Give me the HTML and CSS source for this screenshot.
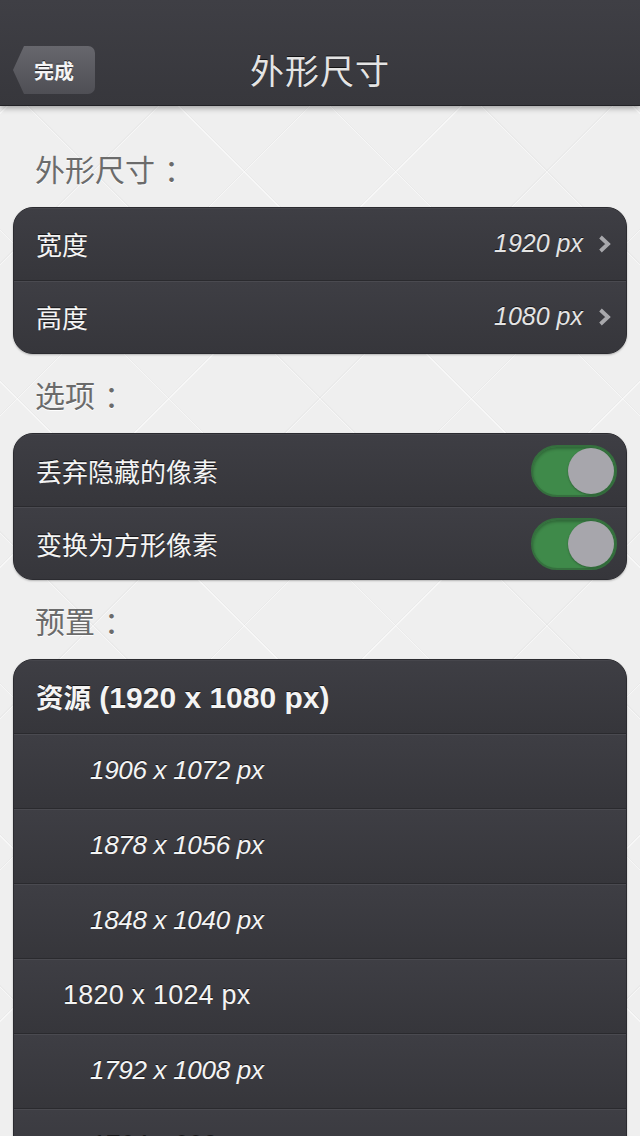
FILE: index.html
```html
<!DOCTYPE html>
<html lang="zh-CN">
<head>
  <meta charset="UTF-8" />
  <meta name="viewport" content="width=device-width, initial-scale=1.0"/>
  <title>外形尺寸</title>
  <link rel="stylesheet" href="styles.css">
</head>
<body>

  <header class="navbar">
    <a href="#" class="back-btn">完成</a>
    <h1 class="nav-title">外形尺寸</h1>
    <span class="nav-spacer"></span>
  </header>

  <main class="content">
    <h2 class="section-title first">外形尺寸<span class="colon">：</span></h2>
    <ul class="group">
      <li class="row">
        <span class="label">宽度</span>
        <span class="value">1920 px</span>
        <svg class="chevron" viewBox="0 0 13 18" width="13" height="18"><polyline points="2.5,2 10,9 2.5,16" /></svg>
      </li>
      <li class="row">
        <span class="label">高度</span>
        <span class="value">1080 px</span>
        <svg class="chevron" viewBox="0 0 13 18" width="13" height="18"><polyline points="2.5,2 10,9 2.5,16" /></svg>
      </li>
    </ul>

    <h2 class="section-title">选项<span class="colon">：</span></h2>
    <ul class="group">
      <li class="row toggle-row">
        <span class="label">丢弃隐藏的像素</span>
        <span class="switch on"><span class="knob"></span></span>
      </li>
      <li class="row toggle-row">
        <span class="label">变换为方形像素</span>
        <span class="switch on"><span class="knob"></span></span>
      </li>
    </ul>

    <h2 class="section-title">预置<span class="colon">：</span></h2>
    <ul class="group presets">
      <li class="row preset source"><span><span class="cjk">资源</span> (1920 x 1080 px)</span></li>
      <li class="row preset sub">1906 x 1072 px</li>
      <li class="row preset sub">1878 x 1056 px</li>
      <li class="row preset sub">1848 x 1040 px</li>
      <li class="row preset std">1820 x 1024 px</li>
      <li class="row preset sub">1792 x 1008 px</li>
      <li class="row preset sub">1764 x 992 px</li>
    </ul>
  </main>

</body>
</html>
```

FILE: styles.css
```css
html, body {
  margin: 0;
  height: 1136px;
  overflow: hidden;
}
body {
  font-family: "Liberation Sans", "Noto Sans CJK SC", sans-serif;
  color: #333;
  background-color: #efefef;
  background-image:
    repeating-linear-gradient(45deg, transparent 0, transparent 105px, rgba(255,255,255,0.5) 105px, rgba(255,255,255,0.5) 106px, rgba(0,0,0,0.02) 106px, rgba(0,0,0,0.02) 107px),
    repeating-linear-gradient(-45deg, transparent 0, transparent 105px, rgba(255,255,255,0.5) 105px, rgba(255,255,255,0.5) 106px, rgba(0,0,0,0.02) 106px, rgba(0,0,0,0.02) 107px);
}

/* navbar */
.navbar {
  position: relative;
  z-index: 2;
  height: 106px;
  box-sizing: border-box;
  padding: 34px 13px 0;
  display: grid;
  grid-template-columns: 1fr auto 1fr;
  grid-template-rows: 72px;
  align-items: center;
  background: linear-gradient(#3f3f45, #37373c);
  border-bottom: 1px solid #222226;
  box-shadow: 0 2px 6px rgba(0,0,0,0.35);
}
.back-btn {
  justify-self: start;
  width: 82px;
  height: 48px;
  display: flex;
  align-items: center;
  justify-content: center;
  font-family: "Noto Sans CJK SC", sans-serif;
  font-size: 20px;
  font-weight: bold;
  color: #f4f4f4;
  text-decoration: none;
  text-shadow: 0 -1px 0 rgba(0,0,0,0.6);
  background: linear-gradient(#67676d, #4f4f55);
  border-radius: 7px;
  clip-path: polygon(11px 0, 100% 0, 100% 100%, 11px 100%, 0 50%);
}
.nav-title {
  margin: 0;
  line-height: 72px;
  font-family: "Noto Sans CJK SC", sans-serif;
  font-size: 34px;
  font-weight: normal;
  color: #e4e4e4;
  text-shadow: 0 -1px 0 rgba(0,0,0,0.7);
  letter-spacing: 1px;
}

/* content */
.content {
  padding: 0 13px;
}
.section-title {
  margin: 0;
  padding: 20px 0 19px 22px;
  line-height: 40px;
  font-family: "Noto Sans CJK SC", sans-serif;
  font-size: 30px;
  font-weight: normal;
  color: #6b6b6b;
  text-shadow: 0 1px 0 #fff;
}
.section-title.first {
  padding-top: 42px;
}
.colon {
  margin-left: 9px;
}

.group {
  list-style: none;
  margin: 0;
  padding: 0;
  border: 1px solid #2b2b30;
  border-radius: 20px;
  overflow: hidden;
  background: #3a3a40;
  box-shadow: 0 1px 2px rgba(0,0,0,0.25);
}
.row {
  height: 73px;
  box-sizing: border-box;
  display: flex;
  align-items: center;
  padding: 0 15px 2px 22px;
  background: linear-gradient(#3e3e44, #36363b);
  border-top: 1px solid #4a4a50;
  border-bottom: 1px solid #2a2a2e;
  color: #f4f4f4;
  text-shadow: 0 -1px 0 rgba(0,0,0,0.6);
}
.row:first-child {
  border-top-color: #46464c;
}
.row:last-child {
  height: 72px;
  border-bottom: none;
}
.label {
  flex: 1;
  font-family: "Noto Sans CJK SC", sans-serif;
  font-size: 26px;
}
.value {
  font-size: 25px;
  font-style: italic;
  color: #e4e4e4;
  margin-right: 15px;
}
.chevron {
  fill: none;
  stroke: #a8a8ac;
  stroke-width: 3.8;
}

/* switches */
.toggle-row {
  padding-right: 9px;
  padding-bottom: 0;
}
.switch {
  width: 86px;
  height: 52px;
  box-sizing: border-box;
  border-radius: 26px;
  background: #3f8a4a;
  border: 2px solid #356f3e;
  box-shadow: inset 0 2px 3px rgba(0,0,0,0.25);
  display: flex;
  align-items: center;
  justify-content: flex-end;
  padding: 0 1px;
}
.knob {
  width: 46px;
  height: 46px;
  border-radius: 50%;
  background: #a7a6ac;
  box-shadow: 0 1px 2px rgba(0,0,0,0.3);
}

/* presets */
.preset {
  height: 75px;
  font-size: 26px;
  padding-left: 76px;
  padding-bottom: 3px;
}
.preset:last-child {
  height: 75px;
}
.preset.source {
  height: 74px;
  padding-left: 22px;
  font-size: 30px;
  font-weight: bold;
}
.preset .cjk {
  font-family: "Noto Sans CJK SC", sans-serif;
  font-size: 27.5px;
}
.preset.sub {
  font-style: italic;
  letter-spacing: -0.3px;
}
.preset.std {
  padding-left: 49px;
  font-size: 27px;
  letter-spacing: 0.2px;
}
```
